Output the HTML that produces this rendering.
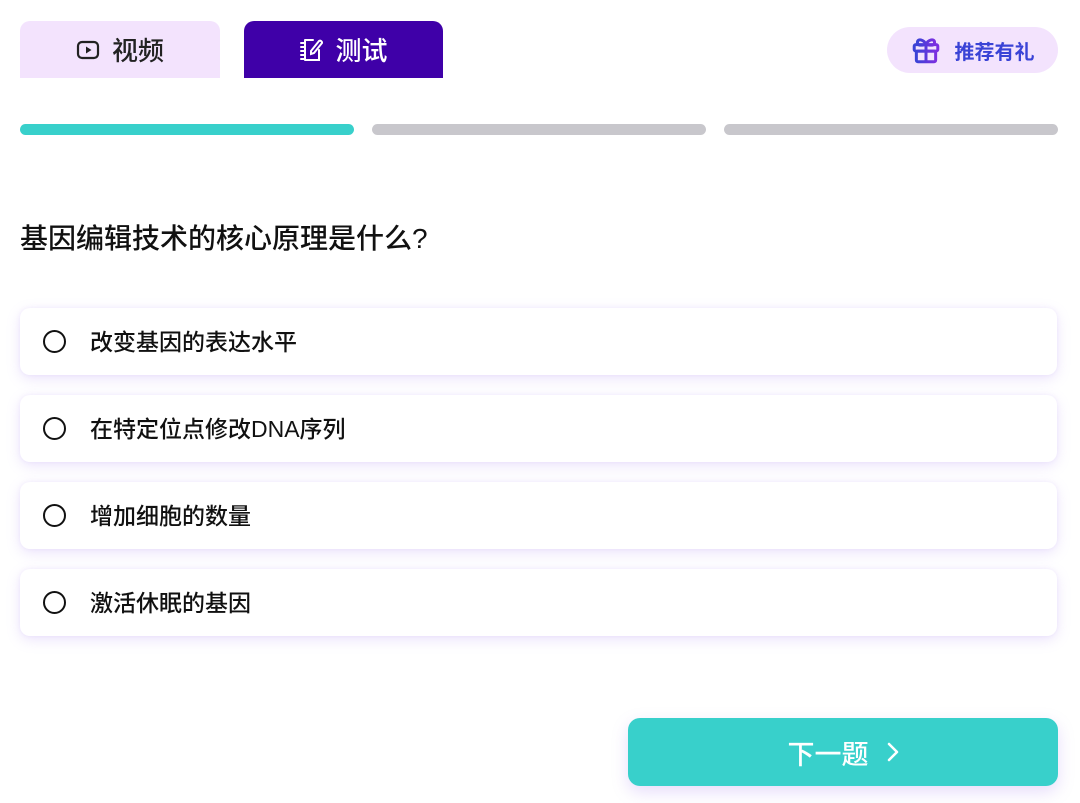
<!DOCTYPE html>
<html><head><meta charset="utf-8"><style>
*{margin:0;padding:0;box-sizing:border-box}
body{width:1080px;height:803px;background:#fff;font-family:"Liberation Sans","Noto Sans CJK SC",sans-serif;position:relative;overflow:hidden;color:#111}
.tab{position:absolute;top:21px;height:57px;border-radius:10px 10px 0 0;display:flex;align-items:center;justify-content:center;font-size:26px;font-weight:500;gap:12px}
.t1{left:20px;width:200px;background:#f3e3fd;color:#222}
.t2{left:244px;width:199px;background:#3f00a8;color:#fff}
.gift{position:absolute;left:887px;top:27px;width:171px;height:46px;border-radius:23px;background:#f3e3fd;display:flex;align-items:center;justify-content:center;gap:14px;color:#3a43d6;font-weight:bold;font-size:20px}
.bar{position:absolute;top:124px;height:11px;border-radius:6px;background:#c8c7cc;width:334px}
.q{position:absolute;left:20px;top:217px;font-size:28px;font-weight:500}
.opt{position:absolute;left:20px;width:1037px;height:67px;background:#fff;border-radius:10px;box-shadow:0 4px 14px rgba(160,120,240,.2),0 0 4px rgba(160,120,240,.1);display:flex;align-items:center;font-size:23px;font-weight:500}
.opt span{position:relative;top:-2px}
.opt .r{width:23px;height:23px;border:2.8px solid #111;border-radius:50%;margin-left:23px;margin-right:24px}
.btn{position:absolute;left:628px;top:718px;width:430px;height:68px;border-radius:12px;background:#38d0cb;color:#fff;font-size:27px;font-weight:500;display:flex;align-items:center;justify-content:center;gap:18px;box-shadow:0 6px 16px rgba(160,120,240,.25)}
</style></head><body>
<div class="tab t1"><svg width="24" height="20" viewBox="0 0 24 20"><rect x="2" y="2" width="20" height="16" rx="4" fill="none" stroke="#222" stroke-width="2.2"/><path d="M10 6.5v7l5.5-3.5z" fill="#222"/></svg><span>视频</span></div>
<div class="tab t2"><svg width="24" height="26" viewBox="0 0 24 26"><path d="M6 3h8M6 23h14V13M6 3v20M2 6h4M2 10h4M2 14h4M2 18h4M2 22h4M12 14l8-10a2 2 0 0 1 3 2l-8 10-3 1z" fill="none" stroke="#fff" stroke-width="2" stroke-linecap="round"/></svg><span>测试</span></div>
<div class="gift"><svg width="30" height="30" viewBox="0 0 28 28"><defs><linearGradient id="g" x1="0" x2="1"><stop offset="0" stop-color="#3a43d6"/><stop offset="1" stop-color="#7b2fe0"/></linearGradient></defs><g fill="none" stroke="url(#g)" stroke-width="2.8" stroke-linejoin="round"><rect x="3" y="9" width="22" height="6" rx="1.5"/><rect x="5" y="15" width="18" height="10" rx="1.5"/><path d="M14 9v16M14 9c-2-5-8-6-8-2s6 2 8 2c2 0 8 2 8-2s-6-3-8 2"/></g></svg><span>推荐有礼</span></div>
<div class="bar" style="left:20px;background:#38d0cb"></div>
<div class="bar" style="left:372px"></div>
<div class="bar" style="left:724px"></div>
<div class="q">基因编辑技术的核心原理是什么?</div>
<div class="opt" style="top:308px"><div class="r"></div><span>改变基因的表达水平</span></div>
<div class="opt" style="top:395px"><div class="r"></div><span>在特定位点修改DNA序列</span></div>
<div class="opt" style="top:482px"><div class="r"></div><span>增加细胞的数量</span></div>
<div class="opt" style="top:569px"><div class="r"></div><span>激活休眠的基因</span></div>
<div class="btn"><span>下一题</span><svg width="12" height="20" viewBox="0 0 12 20"><path d="M2 2l8 8-8 8" fill="none" stroke="#fff" stroke-width="2.5" stroke-linecap="round" stroke-linejoin="round"/></svg></div>
</body></html>
